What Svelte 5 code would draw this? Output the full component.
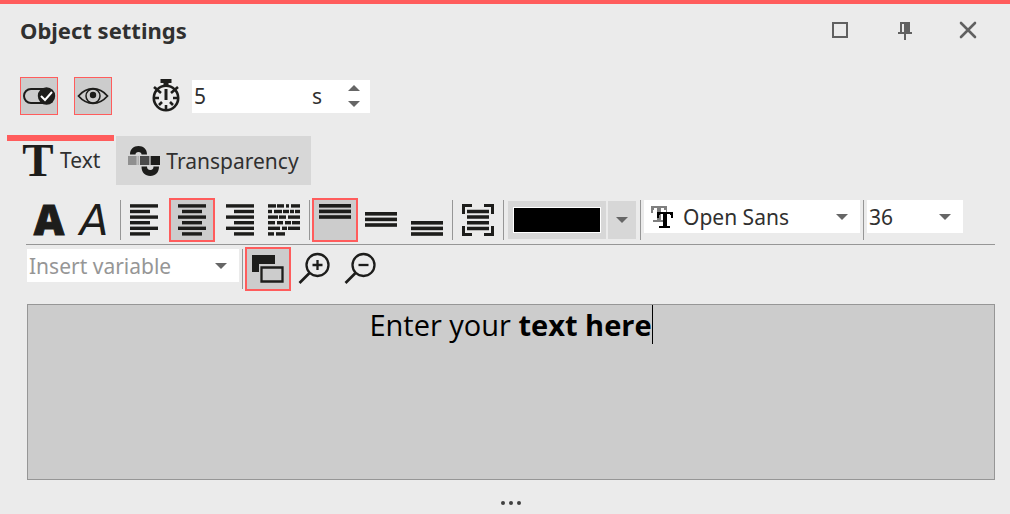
<script>
    let enabled = $state(true);
    let visible = $state(true);
    let duration = $state(5);
    let activeTab = $state('text');
    let bold = $state(false);
    let italic = $state(false);
    let align = $state('center');
    let valign = $state('top');
    let fit = $state(false);
    let contrast = $state(true);
    let fontName = $state('Open Sans');
    let fontSize = $state('36');
    let variable = $state('');

    const fonts = ['Open Sans', 'Noto Sans', 'Roboto', 'Lato'];
    const sizes = ['12', '18', '24', '36', '48', '72'];

    // each line of an alignment icon: [x, width]
    const alignments = [
        { id: 'left', label: 'Align left', lines: [[0, 28], [0, 20], [0, 28], [0, 20], [0, 28], [0, 20]] },
        { id: 'center', label: 'Align center', lines: [[2, 28], [6, 20], [2, 28], [6, 20], [2, 28], [6, 20]] },
        { id: 'right', label: 'Align right', lines: [[4, 28], [12, 20], [4, 28], [12, 20], [4, 28], [12, 20]] },
    ];

    const words = [
        [[0, 8], [9, 7], [18, 3], [23, 9]],
        [[0, 4], [6, 8], [15, 6], [22, 4], [27, 5]],
        [[0, 10], [11, 7], [20, 12]],
        [[0, 7], [9, 6], [17, 6], [24, 8]],
        [[0, 12], [14, 5], [20, 12]],
        [[0, 6], [8, 9]],
    ];

    const valigns = [
        { id: 'top', label: 'Align top', y: 0 },
        { id: 'middle', label: 'Align middle', y: 8 },
        { id: 'bottom', label: 'Align bottom', y: 17 },
    ];
</script>

{#snippet arrow()}
    <svg class="arrow" width="12" height="6" viewBox="0 0 12 6"><path d="M0 0h12L6 6z" /></svg>
{/snippet}

<main>
    <header>
        <h1>Object settings</h1>
        <div class="window-buttons">
            <button aria-label="Maximize">
                <svg width="18" height="18" viewBox="0 0 18 18"><path d="M2 2h14v14H2z" fill="none" stroke="#606060" stroke-width="2" /></svg>
            </button>
            <button aria-label="Pin">
                <svg width="18" height="18" viewBox="0 0 18 18" fill="#606060"><path d="M5 1h10v10h2v2h-6v6H9v-6H3v-2h2zM7 3v8h2V3z" fill-rule="evenodd" /></svg>
            </button>
            <button aria-label="Close">
                <svg width="18" height="18" viewBox="0 0 18 18"><path d="M2 2l14 14M16 2L2 16" stroke="#606060" stroke-width="2.6" stroke-linecap="round" /></svg>
            </button>
        </div>
    </header>

    <div class="options">
        <button class="toggle" class:on={enabled} aria-label="Enabled" aria-pressed={enabled} onclick={() => (enabled = !enabled)}>
            <svg width="32" height="32" viewBox="0 0 32 32">
                <rect x="1" y="9" width="28" height="14" rx="7" fill="none" stroke="#1d1d1b" stroke-width="2" />
                <circle cx="23.5" cy="16" r="8.7" fill="#1d1d1b" />
                <path d="M18 16l4 4 7-8" fill="none" stroke="#fff" stroke-width="2" />
            </svg>
        </button>
        <button class="toggle" class:on={visible} aria-label="Visible" aria-pressed={visible} onclick={() => (visible = !visible)}>
            <svg width="32" height="32" viewBox="0 0 32 32">
                <path d="M1.5 16C5 12 10 8.7 16 8.7S27 12 30.5 16C27 20 22 23.3 16 23.3S5 20 1.5 16z" fill="none" stroke="#1d1d1b" stroke-width="1.8" />
                <circle cx="16" cy="16" r="7" fill="none" stroke="#1d1d1b" stroke-width="1.5" />
                <circle cx="16" cy="15" r="3.2" fill="#1d1d1b" />
            </svg>
        </button>
        <div class="duration">
            <svg width="28" height="32" viewBox="0 0 28 32" fill="none" stroke="#1d1d1b">
                <path d="M8.5-1h11v4h-11z" fill="#1d1d1b" stroke="none" />
                <path d="M14 2v4" stroke-width="5" />
                <circle cx="14" cy="18" r="12.2" stroke-width="2.6" />
                <path d="M14 9v11" stroke-width="3" />
                <path d="M14 25v5M2 18h5M21 18h5M2 7l7 6M26 7l-7 6M7 25l3-3M21 25l-3-3" stroke-width="2.6" />
            </svg>
            <div class="spin">
                <input id="duration" type="number" aria-label="Duration in seconds" bind:value={duration} />
                <label for="duration">s</label>
                <div class="steps">
                    <button aria-label="Increase" onclick={() => duration++}>
                        <svg class="arrow" width="12" height="6" viewBox="0 0 12 6"><path d="M0 6h12L6 0z" /></svg>
                    </button>
                    <button aria-label="Decrease" onclick={() => duration--}>{@render arrow()}</button>
                </div>
            </div>
        </div>
    </div>

    <div class="tabs" role="tablist">
        <button role="tab" class:active={activeTab === 'text'} aria-selected={activeTab === 'text'} onclick={() => (activeTab = 'text')}>
            <svg width="32" height="34" viewBox="0 0 32 34"><text class="serif" x="16" y="33" text-anchor="middle">T</text></svg>
            Text
        </button>
        <button role="tab" class:active={activeTab === 'transparency'} aria-selected={activeTab === 'transparency'} onclick={() => (activeTab = 'transparency')}>
            <svg width="32" height="32" viewBox="0 0 32 32">
                <path d="M2 9.5C2 4 5.500 1 10.500 1S19 4 19 9.500h-5.500C13.500 8 12.500 7 10.500 7S7.500 8 7.500 9.500z" fill="#1d1d1b" />
                <path d="M13.500 21.500H19c0 2 1 3.500 3.300 3.500s3.200-1.500 3.200-3.500H31c0 6-3.500 9.500-8.700 9.500s-8.800-3.500-8.800-9.500z" fill="#1d1d1b" />
                <path d="M0 11h8.600v9H0z" fill="#909090" />
                <path d="M9.400 11h1.800v9H9.400z" fill="#b0b0b0" />
                <path d="M12 11h9.400v9H12z" fill="#4a4a4a" />
                <path d="M22.600 11H32v9h-9.400z" fill="#1d1d1b" />
            </svg>
            Transparency
        </button>
    </div>

    <section>
        <div class="toolbar">
            <button class="tool" class:on={bold} aria-label="Bold" onclick={() => (bold = !bold)}>
                <svg width="36" height="32" viewBox="0 0 36 32"><text class="heavy" x="18" y="31" text-anchor="middle">A</text></svg>
            </button>
            <button class="tool" class:on={italic} aria-label="Italic" onclick={() => (italic = !italic)}>
                <svg width="36" height="32" viewBox="0 0 36 32"><text class="oblique" x="17" y="31" text-anchor="middle">A</text></svg>
            </button>
            <span class="separator"></span>
            {#each alignments as item}
                <button class="tool" class:on={align === item.id} aria-label={item.label} onclick={() => (align = item.id)}>
                    <svg width="32" height="32" viewBox="0 0 32 32" fill="#1d1d1b">
                        {#each item.lines as [x, width], i}
                            <rect {x} y={i * 5.6 + 0.2} {width} height="3.4" />
                        {/each}
                    </svg>
                </button>
            {/each}
            <button class="tool" class:on={align === 'justify'} aria-label="Justify" onclick={() => (align = 'justify')}>
                <svg width="32" height="32" viewBox="0 0 32 32" fill="#1d1d1b">
                    {#each words as line, i}
                        {#each line as [x, width]}
                            <rect {x} y={i * 5.6 + 0.2} {width} height="3.4" />
                        {/each}
                    {/each}
                </svg>
            </button>
            <span class="separator"></span>
            {#each valigns as item}
                <button class="tool" class:on={valign === item.id} aria-label={item.label} onclick={() => (valign = item.id)}>
                    <svg width="32" height="32" viewBox="0 0 32 32" fill="#1d1d1b">
                        {#each [0, 5.6, 11.2] as y}
                            <rect x="0" y={item.y + y} width="32" height="3.6" />
                        {/each}
                    </svg>
                </button>
            {/each}
            <span class="separator"></span>
            <button class="tool" class:on={fit} aria-label="Fit text" onclick={() => (fit = !fit)}>
                <svg width="32" height="32" viewBox="0 0 32 32" fill="none" stroke="#1d1d1b">
                    <path d="M1.5 10V1.5H10M22 1.5h8.5V10M30.5 22v8.5H22M10 30.5H1.5V22" stroke-width="3" />
                    <path d="M5 7.5h22M5 13h22M5 18.700h22M5 24.500h22" stroke-width="3.4" />
                </svg>
            </button>
            <span class="separator"></span>
            <div class="color">
                <button class="swatch" aria-label="Text color"><span></span></button>
                <button class="more" aria-label="More colors">{@render arrow()}</button>
            </div>
            <span class="separator"></span>
            <div class="combo font">
                <svg class="font-icon" width="22" height="22" viewBox="0 0 22 22">
                    <path d="M0 0h16v6h-1V4h-2V2h-3v12h2v2H2v-2h4V2H3v2H2v3H0z" fill="#808080" />
                    <path d="M6 6h16v6h-2V9h-1V8h-3v12h3v2H8v-2h4V8H9v1H8v3H6z" fill="#000" />
                </svg>
                <select aria-label="Font" bind:value={fontName}>
                    {#each fonts as name}
                        <option value={name}>{name}</option>
                    {/each}
                </select>
                {@render arrow()}
            </div>
            <span class="separator"></span>
            <div class="combo size">
                <select aria-label="Font size" bind:value={fontSize}>
                    {#each sizes as size}
                        <option value={size}>{size}</option>
                    {/each}
                </select>
                {@render arrow()}
            </div>
        </div>

        <div class="toolbar second">
            <div class="combo variable">
                <select aria-label="Variable" bind:value={variable}>
                    <option value="">Insert variable</option>
                    <option value="date">Date</option>
                    <option value="time">Time</option>
                </select>
                {@render arrow()}
            </div>
            <span class="separator"></span>
            <button class="tool" class:on={contrast} aria-label="Background" onclick={() => (contrast = !contrast)}>
                <svg width="32" height="32" viewBox="0 0 32 32">
                    <path d="M0 2h23v9H7v8H0z" fill="#1d1d1b" />
                    <path d="M9.500 14.500h21v14h-21z" fill="none" stroke="#1d1d1b" stroke-width="2.3" />
                </svg>
            </button>
            {#each ['in', 'out'] as zoom}
                <button class="tool" aria-label="Zoom {zoom}">
                    <svg width="32" height="32" viewBox="0 0 32 32" fill="none" stroke="#1d1d1b">
                        <circle cx="19.5" cy="12" r="11" stroke-width="2.3" />
                        <path d="M11.5 20L1.5 30" stroke-width="2.6" />
                        <path d={zoom === 'in' ? 'M14.5 12h10M19.5 7v10' : 'M14.5 12h10'} stroke-width="2.3" />
                    </svg>
                </button>
            {/each}
        </div>

        <div class="editor" contenteditable="true" role="textbox" tabindex="0" aria-label="Text">Enter your <b>text here</b><i class="caret"></i></div>
    </section>

    <footer>
        <button class="dots" aria-label="Resize"><span></span><span></span><span></span></button>
    </footer>
</main>

<style>
    :global(body) {
        background: #ebebeb;
    }

    main {
        border-top: 4px solid #ff5c5c;
        font-family: "Noto Sans", Tahoma, sans-serif;
        font-size: 21px;
        line-height: 32px;
        color: #303030;
    }

    button, input, select {
        margin: 0;
        padding: 0;
        border: 0;
        background: none;
        font: inherit;
        color: inherit;
        outline: none;
    }

    svg {
        display: block;
        flex: none;
        overflow: visible;
    }

    header {
        display: flex;
        align-items: center;
        justify-content: space-between;
        height: 52px;
        padding: 0 33px 0 20px;
    }

    h1 {
        margin: 0;
        font-size: 22px;
        font-weight: bold;
    }

    .window-buttons {
        display: flex;
        gap: 46px;
    }

    .options {
        display: flex;
        align-items: center;
        gap: 16px;
        margin-top: 21px;
        padding-left: 20px;
    }

    .toggle {
        display: grid;
        place-items: center;
        box-sizing: border-box;
        width: 38px;
        height: 38px;
        border: 1px solid transparent;
    }

    .toggle.on {
        border-color: #ff5c5c;
        background: #ccc;
    }

    .duration {
        display: flex;
        align-items: center;
        gap: 12px;
        margin-left: 24px;
    }

    .spin {
        display: flex;
        align-items: center;
        width: 178px;
        height: 33px;
        background: #fff;
    }

    .spin input {
        width: 120px;
        padding-left: 2px;
        box-sizing: border-box;
        appearance: textfield;
    }

    .spin input::-webkit-inner-spin-button {
        display: none;
    }

    .steps {
        display: flex;
        flex-direction: column;
        gap: 10px;
        margin-left: auto;
        padding-right: 10px;
    }

    .arrow {
        fill: #666;
    }

    .tabs {
        display: flex;
        gap: 2px;
        margin-top: 20px;
        padding-left: 7px;
    }

    .tabs button {
        display: flex;
        align-items: center;
        gap: 6px;
        height: 50px;
        padding: 0 12px;
        border-top: 1px solid #ebebeb;
        background: #d7d7d7;
    }

    .tabs .active {
        padding: 0 14px 6px 15px;
        border-top: 6px solid #ff5c5c;
        background: none;
    }

    text {
        fill: #1d1d1b;
    }

    .serif {
        font: bold 47px "Liberation Serif", serif;
    }

    .heavy {
        font: 800 42px "Open Sans", sans-serif;
        stroke: #1d1d1b;
        stroke-width: 1px;
    }

    .oblique {
        font: italic 42px "DejaVu Sans", sans-serif;
    }

    section {
        padding: 0 15px 0 27px;
    }

    .toolbar {
        display: flex;
        height: 47px;
        margin-top: 12px;
        margin-left: -1px;
        border-bottom: 1px solid #969696;
    }

    .tool {
        display: grid;
        place-items: center;
        box-sizing: border-box;
        width: 46px;
        height: 44px;
        margin-top: 1px;
        border: 2px solid transparent;
    }

    .tool.on {
        border-color: #ff5c5c;
        background: #ccc;
    }

    .separator {
        width: 1px;
        height: 40px;
        margin: 3px 2px 0;
        background: #969696;
    }

    .color {
        display: flex;
        gap: 2px;
        height: 38px;
        margin: 4px 2px 0;
    }

    .color button {
        display: grid;
        place-items: center;
        background: #d7d7d7;
    }

    .swatch {
        width: 98px;
    }

    .swatch span {
        width: 86px;
        height: 24px;
        border: 1px solid #fff;
        background: #000;
    }

    .more {
        width: 28px;
    }

    .combo {
        display: flex;
        align-items: center;
        box-sizing: border-box;
        height: 33px;
        margin: 3px 1px 0;
        padding-right: 12px;
        background: #fff;
    }

    .combo select {
        flex: 1;
        min-width: 0;
        padding-left: 2px;
        appearance: none;
    }

    .font {
        width: 216px;
    }

    .font-icon {
        margin: 0 8px 0 7px;
    }

    .size {
        width: 96px;
    }

    .second {
        height: 46px;
        margin: 1px 0 0;
        border: 0;
    }

    .variable {
        width: 212px;
        margin-left: 0;
        color: #969696;
    }

    .editor {
        box-sizing: border-box;
        min-height: 176px;
        margin-top: 12px;
        border: 1px solid #969696;
        background: #ccc;
        color: #000;
        font-family: "Open Sans", sans-serif;
        font-size: 29px;
        line-height: 40px;
        text-align: center;
        outline: none;
    }

    .caret {
        display: inline-block;
        width: 1px;
        height: 39px;
        background: #000;
        vertical-align: top;
    }

    footer {
        display: flex;
        justify-content: center;
        margin-top: 21px;
        padding-left: 12px;
    }

    .dots {
        display: flex;
        gap: 4px;
    }

    .dots span {
        width: 4px;
        height: 4px;
        border-radius: 50%;
        background: #404040;
    }
</style>
